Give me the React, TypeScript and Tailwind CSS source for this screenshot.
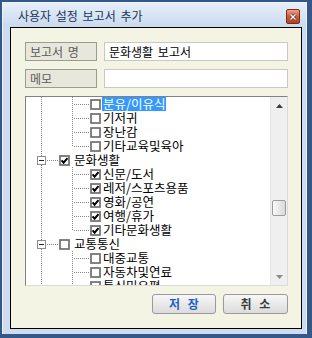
import React from "react";

type Row = { lvl: 1 | 2; text: string; checked?: boolean; selected?: boolean; last?: boolean };

const rows: Row[] = [
  { lvl: 2, text: "분유/이유식", selected: true },
  { lvl: 2, text: "기저귀" },
  { lvl: 2, text: "장난감" },
  { lvl: 2, text: "기타교육및육아", last: true },
  { lvl: 1, text: "문화생활", checked: true },
  { lvl: 2, text: "신문/도서", checked: true },
  { lvl: 2, text: "레저/스포츠용품", checked: true },
  { lvl: 2, text: "영화/공연", checked: true },
  { lvl: 2, text: "여행/휴가", checked: true },
  { lvl: 2, text: "기타문화생활", checked: true, last: true },
  { lvl: 1, text: "교통통신" },
  { lvl: 2, text: "대중교통" },
  { lvl: 2, text: "자동차및연료" },
  { lvl: 2, text: "통신및우편" },
];

const DOT = "#858585";

function CheckBox({ checked }: { checked?: boolean }) {
  return (
    <svg width="11" height="11" viewBox="0 0 11 11" className="shrink-0">
      <rect x="1" y="1" width="9" height="9" fill="#ffffff" stroke="#6e6e6e" strokeWidth="1.7" />
      {checked && (
        <path d="M2.6 5.3 L4.6 7.7 L8.5 3.2" fill="none" stroke="#000000" strokeWidth="2" />
      )}
    </svg>
  );
}

function Connector1() {
  return (
    <svg width="33" height="14" viewBox="0 0 33 14" className="shrink-0">
      <line x1="15.5" y1="0" x2="15.5" y2="3" stroke={DOT} strokeDasharray="1 1" />
      <line x1="15.5" y1="12" x2="15.5" y2="14" stroke={DOT} strokeDasharray="1 1" />
      <rect x="11.5" y="3.5" width="8" height="8" fill="#ffffff" stroke="#8c8c8c" />
      <line x1="13" y1="7.5" x2="18" y2="7.5" stroke="#222222" />
      <line x1="21" y1="7.5" x2="33" y2="7.5" stroke={DOT} strokeDasharray="1 1" />
    </svg>
  );
}

function Connector2({ last }: { last?: boolean }) {
  return (
    <svg width="64" height="14" viewBox="0 0 64 14" className="shrink-0">
      <line x1="15.5" y1="0" x2="15.5" y2="14" stroke={DOT} strokeDasharray="1 1" />
      <line x1="46.5" y1="0" x2="46.5" y2={last ? 8 : 14} stroke={DOT} strokeDasharray="1 1" />
      <line x1="48" y1="7.5" x2="64" y2="7.5" stroke={DOT} strokeDasharray="1 1" />
    </svg>
  );
}

export default function App() {
  return (
    <div className="w-[312px] h-[338px] bg-[#35588a] pt-[2px] pl-[2px] pr-[5px] pb-[4px] font-['Noto_Sans_CJK_KR','Noto_Sans',sans-serif]">
      <div className="h-full flex flex-col bg-[#cddcf0] border-l border-t border-r border-[#eef4fb]">
        {/* title bar */}
        <div className="h-[24px] shrink-0 flex items-center justify-between pl-[15px] pr-[6px] bg-gradient-to-b from-[#e6eff9] to-[#c9daef]">
          <span className="text-[12px] leading-[14px] text-[#1b3554] [word-spacing:2px] pt-[2px]">
            사용자 설정 보고서 추가
          </span>
          <div className="w-[14px] h-[15px] mt-[3px] rounded-[2px] border border-[#7d2b16] bg-gradient-to-b from-[#e9a08a] via-[#cf5d3d] to-[#b5401f] flex items-center justify-center">
            <svg width="8" height="8" viewBox="0 0 8 8">
              <path d="M1.5 1.5 L6.5 6.5 M6.5 1.5 L1.5 6.5" stroke="#5a1a0a" strokeWidth="2.6" />
              <path d="M1.5 1.5 L6.5 6.5 M6.5 1.5 L1.5 6.5" stroke="#ffffff" strokeWidth="1.5" />
            </svg>
          </div>
        </div>

        {/* content */}
        <div className="h-[302px] ml-[7px] mr-[4px] border border-black bg-[#f3f4e3] flex flex-col pt-[14px] pl-[14px] pr-[13px]">
          <div className="flex h-[19px]">
            <div className="w-[72px] h-full border border-[#9b9b90] bg-[#e7e7db] text-[#5b5b5b] text-[12px] leading-[17px] pl-[4px] [word-spacing:2px]">
              보고서 명
            </div>
            <div className="ml-[7px] flex-1 h-full border border-[#c9c9bf] bg-white text-black text-[12px] leading-[17px] pl-[4px] [word-spacing:2px]">
              문화생활 보고서
            </div>
          </div>
          <div className="flex h-[19px] mt-[8px]">
            <div className="w-[72px] h-full border border-[#9b9b90] bg-[#e7e7db] text-[#5b5b5b] text-[12px] leading-[17px] pl-[4px] [word-spacing:2px]">
              메모
            </div>
            <div className="ml-[7px] flex-1 h-full border border-[#c9c9bf] bg-white" />
          </div>

          {/* tree */}
          <div className="mt-[8px] h-[190px] flex border border-t-[#828282] border-l-[#828282] border-b-[#dcdcd4] border-r-[#dcdcd4] bg-white">
            <div className="flex-1 overflow-hidden flex flex-col">
              {rows.map((r, i) => (
                <div key={i} className="h-[14px] shrink-0 flex items-center">
                  {r.lvl === 1 ? <Connector1 /> : <Connector2 last={r.last} />}
                  <CheckBox checked={r.checked} />
                  <span
                    className={
                      "whitespace-nowrap text-[12.5px] leading-[14px] h-[14px] " +
                      (r.lvl === 1 ? "ml-[3px] " : "ml-[1px] ") +
                      (r.selected ? "bg-[#3399ff] text-white px-[1px]" : "text-black px-[1px]")
                    }
                  >
                    {r.text}
                  </span>
                </div>
              ))}
            </div>
            <div className="w-[17px] shrink-0 flex flex-col bg-[#efefef] border-l border-[#e6e6e6]">
              <div className="h-[17px] shrink-0 flex items-center justify-center">
                <svg width="7" height="4" viewBox="0 0 7 4">
                  <path d="M0 4 L3.5 0 L7 4 Z" fill="#3c3c3c" />
                </svg>
              </div>
              <div className="flex-1 flex flex-col">
                <div className="mt-[86px] mx-[1px] h-[16px] shrink-0 rounded-[2px] border border-[#9c9c9c] bg-gradient-to-r from-[#f8f8f8] to-[#dadada]" />
              </div>
              <div className="h-[17px] shrink-0 flex items-center justify-center">
                <svg width="7" height="4" viewBox="0 0 7 4">
                  <path d="M0 0 L7 0 L3.5 4 Z" fill="#8a8a8a" />
                </svg>
              </div>
            </div>
          </div>

          {/* buttons */}
          <div className="mt-[8px] flex justify-end gap-[7px]">
            <div className="w-[64px] h-[20px] rounded-[3px] border border-[#9a9a9a] bg-gradient-to-b from-[#f7f7f7] to-[#dcdcdc] flex items-center justify-center text-[12px] font-bold leading-[14px] text-[#1f5fc4] [word-spacing:5px]">
              저 장
            </div>
            <div className="w-[65px] h-[20px] rounded-[3px] border border-[#9a9a9a] bg-gradient-to-b from-[#f7f7f7] to-[#dcdcdc] flex items-center justify-center text-[12px] font-bold leading-[14px] text-[#3a3a3a] [word-spacing:5px]">
              취 소
            </div>
          </div>
        </div>
      </div>
    </div>
  );
}
